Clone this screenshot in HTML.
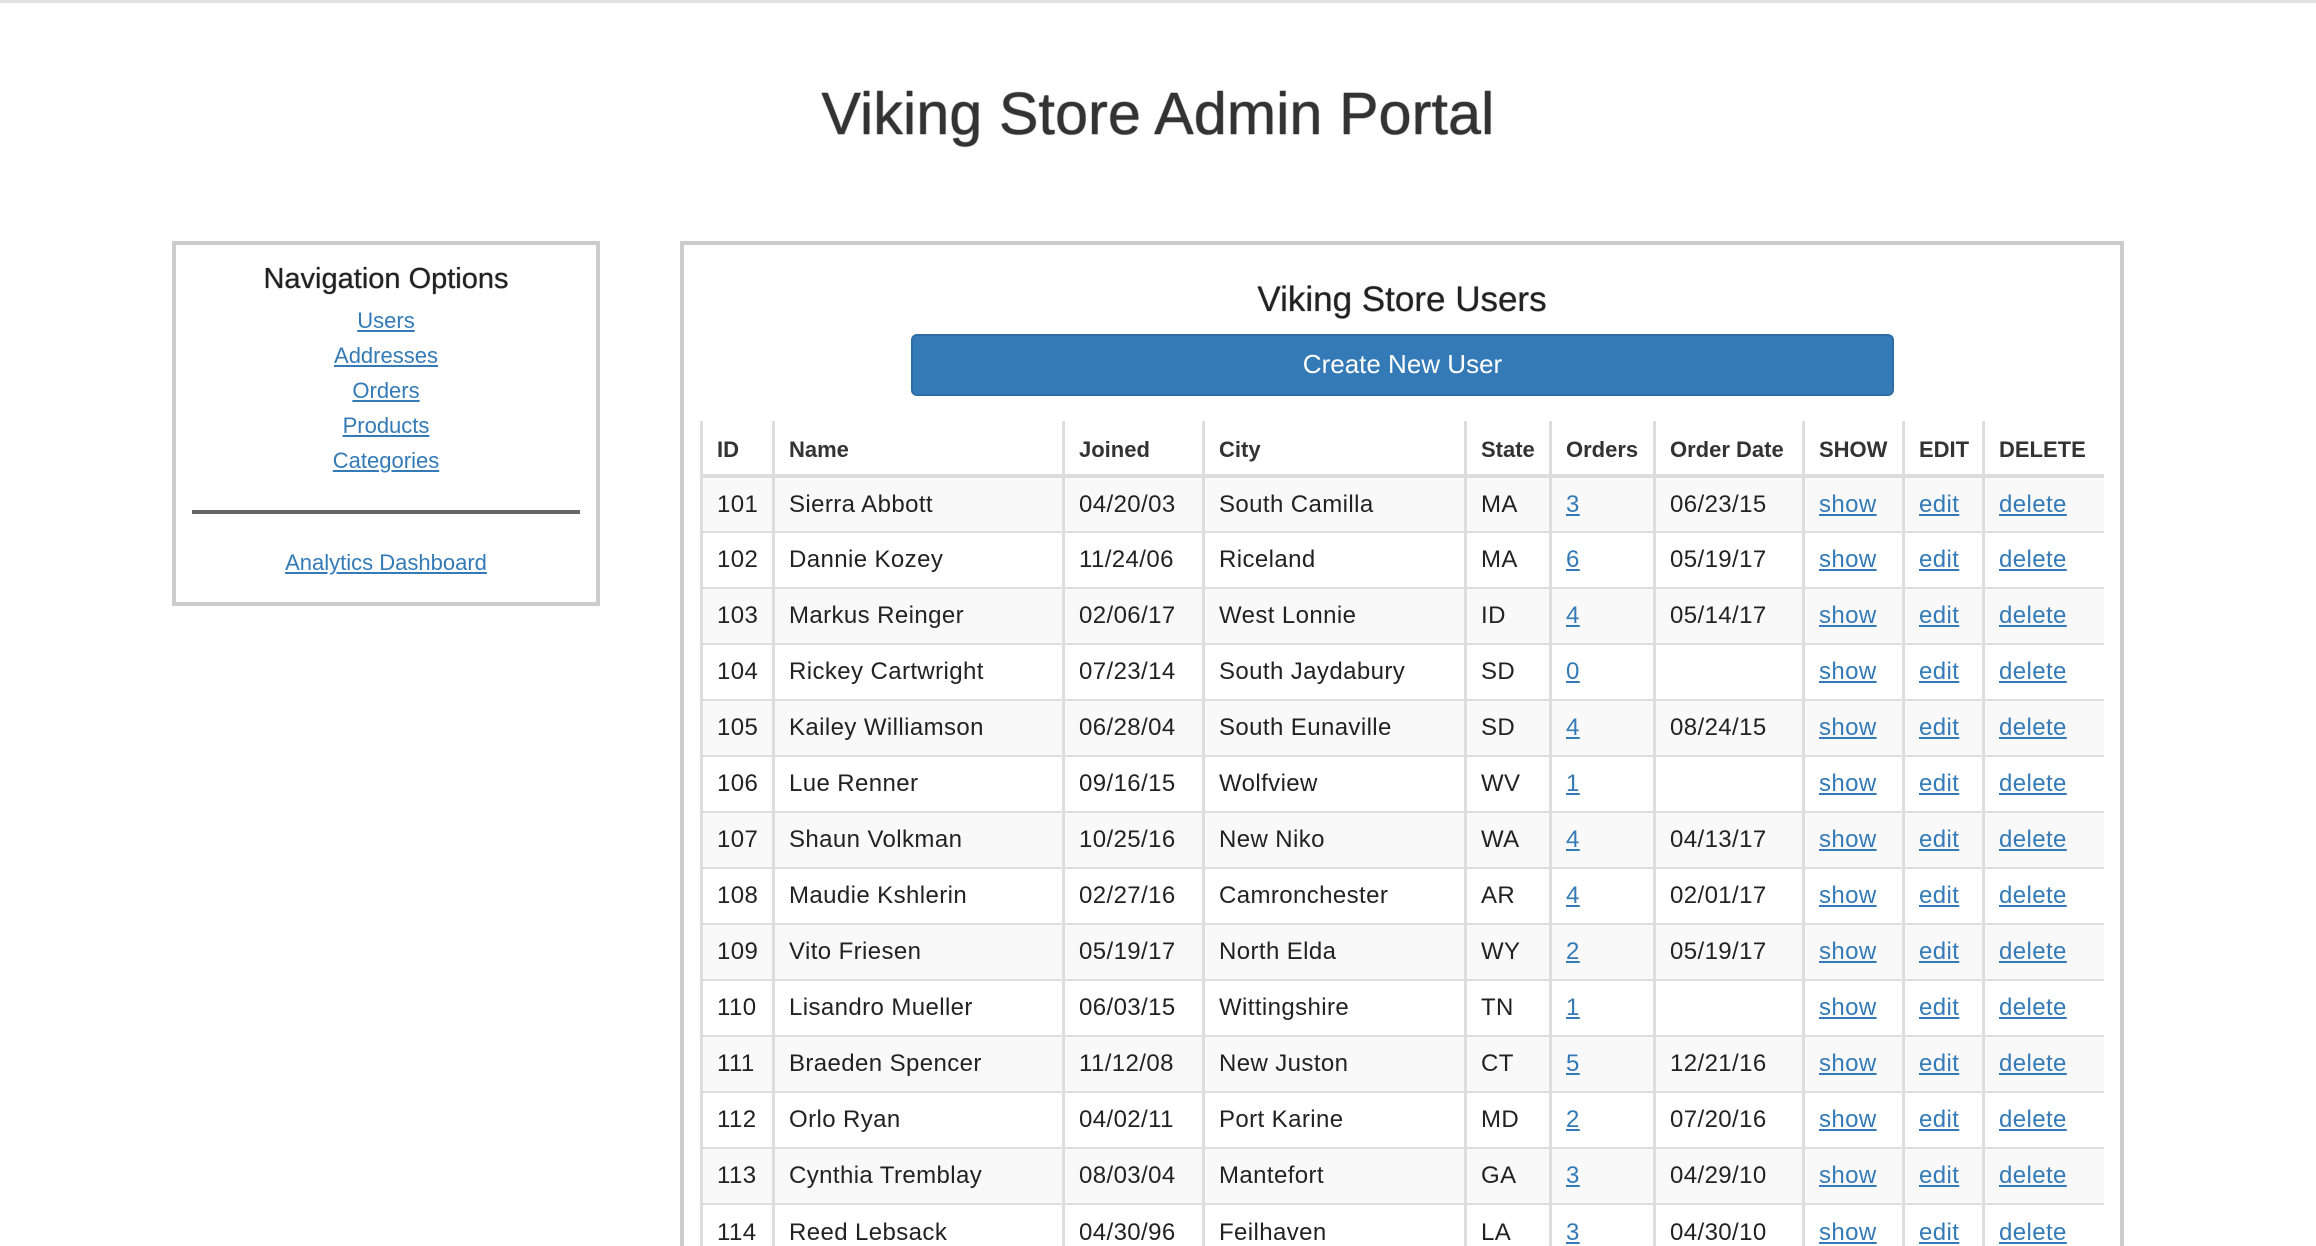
<!DOCTYPE html>
<html><head><meta charset="utf-8">
<style>
*{margin:0;padding:0;box-sizing:border-box}
html,body{width:2316px;height:1246px;overflow:hidden;background:#fff;font-family:"Liberation Sans",Arial,sans-serif;color:#333}
body{border-top:3px solid #e2e2e2;position:relative}
a{color:#337ab7;text-decoration:underline}
h1{position:absolute;left:0;width:2316px;top:76px;text-align:center;font-size:59px;font-weight:normal;line-height:70px;color:#333;letter-spacing:0.2px;text-shadow:0 0 1px #333,0 0 1px #333}
#nav{position:absolute;left:172px;top:238px;width:428px;height:365px;border:4px solid #ccc;text-align:center}
#nav h3{font-size:29px;font-weight:normal;margin-top:16px;line-height:36px;color:#222;text-shadow:0 0 0.8px #222}
#nav .l{font-size:22px;line-height:35px}
#nav .l:first-of-type{margin-top:6px}
#nav hr{border:0;height:4px;background:#666;margin:32px 16px 0 16px}
#nav .a{font-size:22px;margin-top:36px}
#main{position:absolute;left:680px;top:238px;width:1444px;height:1008px;overflow:hidden;border:4px solid #ccc;border-bottom:0}
#main h2{position:absolute;left:0;width:100%;top:33px;text-align:center;font-size:35px;font-weight:normal;line-height:44px;color:#222;text-shadow:0 0 0.8px #222}
.btn{position:absolute;left:227px;top:89px;width:983px;height:62px;background:#337ab7;border:2px solid #2e6da4;border-radius:6px;color:#fff;font-size:26px;text-align:center;line-height:56px}
table{position:absolute;left:16px;top:176px;border-collapse:collapse;table-layout:fixed;width:1402px}
td,th{border-left:3px solid #ddd;text-align:left;padding:0 0 0 14px;font-size:24px;height:56px;white-space:nowrap;overflow:hidden}
th{font-size:22px;font-weight:bold;height:55px;color:#333;padding-top:4px}
tr.h th{border-bottom:4px solid #ddd}
tbody tr td{border-top:2px solid #ddd}
tbody tr:nth-child(odd){background:#f9f9f9}
td{color:#222;letter-spacing:0.4px}
</style></head><body>
<h1>Viking Store Admin Portal</h1>
<div id="nav">
<h3>Navigation Options</h3>
<div class="l"><a>Users</a></div>
<div class="l"><a>Addresses</a></div>
<div class="l"><a>Orders</a></div>
<div class="l"><a>Products</a></div>
<div class="l"><a>Categories</a></div>
<hr>
<div class="a"><a>Analytics Dashboard</a></div>
</div>
<div id="main">
<h2>Viking Store Users</h2>
<div class="btn">Create New User</div>
<table>
<colgroup><col style="width:72px"><col style="width:290px"><col style="width:140px"><col style="width:262px"><col style="width:85px"><col style="width:104px"><col style="width:149px"><col style="width:100px"><col style="width:80px"><col style="width:120px"></colgroup>
<thead><tr class="h"><th>ID</th><th>Name</th><th>Joined</th><th>City</th><th>State</th><th>Orders</th><th>Order Date</th><th>SHOW</th><th>EDIT</th><th>DELETE</th></tr></thead>
<tbody>
<tr><td>101</td><td>Sierra Abbott</td><td>04/20/03</td><td>South Camilla</td><td>MA</td><td><a>3</a></td><td>06/23/15</td><td><a>show</a></td><td><a>edit</a></td><td><a>delete</a></td></tr>
<tr><td>102</td><td>Dannie Kozey</td><td>11/24/06</td><td>Riceland</td><td>MA</td><td><a>6</a></td><td>05/19/17</td><td><a>show</a></td><td><a>edit</a></td><td><a>delete</a></td></tr>
<tr><td>103</td><td>Markus Reinger</td><td>02/06/17</td><td>West Lonnie</td><td>ID</td><td><a>4</a></td><td>05/14/17</td><td><a>show</a></td><td><a>edit</a></td><td><a>delete</a></td></tr>
<tr><td>104</td><td>Rickey Cartwright</td><td>07/23/14</td><td>South Jaydabury</td><td>SD</td><td><a>0</a></td><td></td><td><a>show</a></td><td><a>edit</a></td><td><a>delete</a></td></tr>
<tr><td>105</td><td>Kailey Williamson</td><td>06/28/04</td><td>South Eunaville</td><td>SD</td><td><a>4</a></td><td>08/24/15</td><td><a>show</a></td><td><a>edit</a></td><td><a>delete</a></td></tr>
<tr><td>106</td><td>Lue Renner</td><td>09/16/15</td><td>Wolfview</td><td>WV</td><td><a>1</a></td><td></td><td><a>show</a></td><td><a>edit</a></td><td><a>delete</a></td></tr>
<tr><td>107</td><td>Shaun Volkman</td><td>10/25/16</td><td>New Niko</td><td>WA</td><td><a>4</a></td><td>04/13/17</td><td><a>show</a></td><td><a>edit</a></td><td><a>delete</a></td></tr>
<tr><td>108</td><td>Maudie Kshlerin</td><td>02/27/16</td><td>Camronchester</td><td>AR</td><td><a>4</a></td><td>02/01/17</td><td><a>show</a></td><td><a>edit</a></td><td><a>delete</a></td></tr>
<tr><td>109</td><td>Vito Friesen</td><td>05/19/17</td><td>North Elda</td><td>WY</td><td><a>2</a></td><td>05/19/17</td><td><a>show</a></td><td><a>edit</a></td><td><a>delete</a></td></tr>
<tr><td>110</td><td>Lisandro Mueller</td><td>06/03/15</td><td>Wittingshire</td><td>TN</td><td><a>1</a></td><td></td><td><a>show</a></td><td><a>edit</a></td><td><a>delete</a></td></tr>
<tr><td>111</td><td>Braeden Spencer</td><td>11/12/08</td><td>New Juston</td><td>CT</td><td><a>5</a></td><td>12/21/16</td><td><a>show</a></td><td><a>edit</a></td><td><a>delete</a></td></tr>
<tr><td>112</td><td>Orlo Ryan</td><td>04/02/11</td><td>Port Karine</td><td>MD</td><td><a>2</a></td><td>07/20/16</td><td><a>show</a></td><td><a>edit</a></td><td><a>delete</a></td></tr>
<tr><td>113</td><td>Cynthia Tremblay</td><td>08/03/04</td><td>Mantefort</td><td>GA</td><td><a>3</a></td><td>04/29/10</td><td><a>show</a></td><td><a>edit</a></td><td><a>delete</a></td></tr>
<tr><td>114</td><td>Reed Lebsack</td><td>04/30/96</td><td>Feilhaven</td><td>LA</td><td><a>3</a></td><td>04/30/10</td><td><a>show</a></td><td><a>edit</a></td><td><a>delete</a></td></tr>
</tbody></table>
</div>
</body></html>
